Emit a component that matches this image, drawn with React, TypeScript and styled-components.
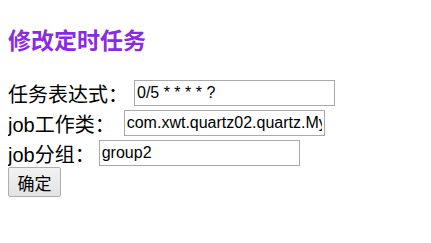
import React from 'react';
import styled, { createGlobalStyle } from 'styled-components';

const GlobalStyle = createGlobalStyle`
    body {
        margin: 8px;
        background: #fff;
        font-family: "Liberation Sans", "Noto Sans CJK SC", sans-serif;
        color: #000;
    }
`

const Title = styled.h2`
    margin: 19px 0 27px;
    font-size: 23px;
    line-height: 24px;
    font-weight: bold;
    color: #8a2be2;
    font-family: "Noto Sans CJK SC", sans-serif;
`

const Form = styled.form`
    display: flex;
    flex-direction: column;
    align-items: flex-start;
`

const Row = styled.div`
    display: flex;
    align-items: center;
    height: 30px;
`

const Label = styled.label`
    font-size: 20px;
    font-family: "Liberation Sans", "Noto Sans CJK SC", sans-serif;
    margin-right: ${(props: { gap: number }) => `${props.gap}px`};
    white-space: nowrap;
`

const Field = styled.input`
    box-sizing: border-box;
    width: 201px;
    height: 26px;
    padding: 1px 2px;
    border: 1px solid #a9a9a9;
    font-family: "Liberation Sans", sans-serif;
    font-size: 16px;
    color: #000;
    background: #fff;
    outline: none;
`

const Submit = styled.button`
    box-sizing: border-box;
    width: 53px;
    height: 30px;
    margin-top: -1px;
    padding: 0;
    border: 1px solid #adadad;
    border-radius: 2px;
    background: linear-gradient(#f2f2f2, #e3e3e3);
    font-family: "Noto Sans CJK SC", sans-serif;
    font-size: 17px;
    color: #000;
`

const fields = [
    { label: '任务表达式：', value: '0/5 * * * * ?', gap: 6 },
    { label: 'job工作类：', value: 'com.xwt.quartz02.quartz.MyJob', gap: 9 },
    { label: 'job分组：', value: 'group2', gap: 4 },
];

function App() {
    return (
        <>
            <GlobalStyle />
            <Title>修改定时任务</Title>
            <Form onSubmit={(e) => e.preventDefault()}>
                {fields.map((f) => (
                    <Row key={f.label}>
                        <Label gap={f.gap}>{f.label}</Label>
                        <Field defaultValue={f.value} />
                    </Row>
                ))}
                <Submit type="submit">确定</Submit>
            </Form>
        </>
    )
}

export default App;
